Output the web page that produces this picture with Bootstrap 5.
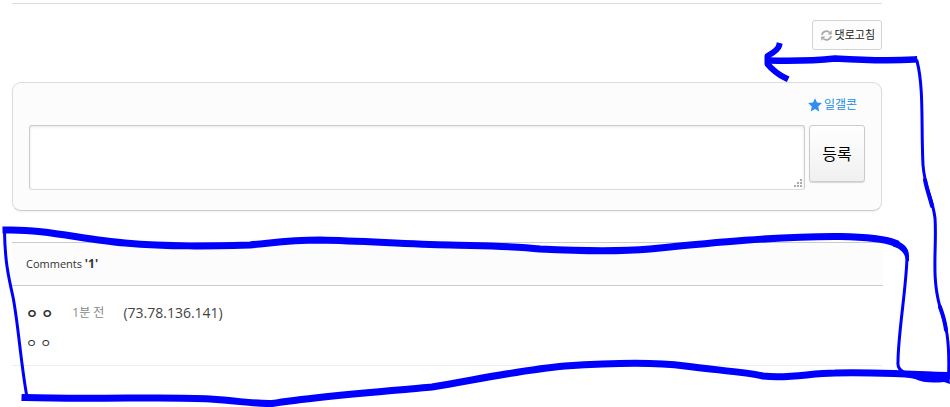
<!DOCTYPE html>
<html lang="ko">
<head>
<meta charset="utf-8">
<meta name="viewport" content="width=device-width, initial-scale=1">
<title>Comments</title>
<link href="https://cdn.jsdelivr.net/npm/bootstrap@5.3.0/dist/css/bootstrap.min.css" rel="stylesheet">
<style>
body { font-family: "Open Sans", "Noto Sans CJK KR", sans-serif; font-size: 12px; line-height: 18px; color: #333; background: #fff; }
.page { padding: 3px 68px 0 12px; }
.rule { border-top: 1px solid #ddd; }
.btn-refresh { height: 30px; padding: 0 6px 0 8px; border: 1px solid #d3d3d3; border-radius: 3px; background: #fdfdfd; color: #222; font-size: 11px; line-height: 18px; gap: 3px; }
.editor { margin-top: 32px; padding: 13px 16px 20px; border: 1px solid #ddd; border-bottom-color: #ccc; border-radius: 9px; background: #fcfcfc; box-shadow: 0 1px 2px rgba(0,0,0,.06); }
.con-link { color: #1a8ce8; margin-right: 8px; gap: 2px; }
.editor-row { margin-top: 11px; }
.input-box { height: 65px; resize: none; border: 1px solid #ccc; border-bottom-color: #ddd; border-radius: 3px; box-shadow: inset 0 1px 3px rgba(0,0,0,.1); font-size: 13px; }
.input-box::-webkit-resizer { display: none; }
.grip { right: 3px; bottom: 3px; }
.btn-submit { width: 56px; height: 57px; padding: 0; border: 1px solid #ccc; border-radius: 3px; background: linear-gradient(#fff, #f0f0f0); box-shadow: 0 1px 1px rgba(0,0,0,.15); font-size: 16px; color: #000; }
.list-head { margin-top: 31px; margin-right: -1px; padding: 12px 14px; border-top: 1px solid #ccc; border-bottom: 1px solid #ccc; background: #fcfcfc; font-size: 11px; line-height: 18px; }
.list-head strong { font-size: 12px; }
.entry { padding: 16px 14px 12px; border-bottom: 1px solid #eee; }
.entry-head { line-height: 22px; gap: 19px; }
.author { font-size: 13px; }
.ago { color: #888; }
.addr { font-size: 14px; color: #444; }
.message { margin-top: 11px; font-size: 12px; }
.ink { fill: none; stroke: #00f; stroke-linecap: square; stroke-linejoin: round; pointer-events: none; }
</style>
<script src="https://cdn.jsdelivr.net/npm/bootstrap@5.3.0/dist/js/bootstrap.bundle.min.js"></script>
</head>
<body class="position-relative overflow-hidden min-vh-100">
<main class="page">
  <div class="rule"></div>
  <div class="d-flex justify-content-end pt-3">
    <button type="button" class="btn btn-refresh d-flex align-items-center">
      <svg width="11" height="11" viewBox="0 0 11 11" fill="none" stroke="#aaa" stroke-width="1.8" aria-hidden="true"><path d="M1 5a4.500 4.500 0 0 1 7.700-2.500M10 6a4.500 4.500 0 0 1-7.700 2.500"/><path fill="#aaa" stroke="none" d="M10.800.3v4.200H6.600zM.2 10.700V6.500h4.200z"/></svg>
      <span>댓로고침</span>
    </button>
  </div>

  <form class="editor">
    <div class="d-flex justify-content-end">
      <a href="#" class="con-link d-flex align-items-center text-decoration-none">
        <svg width="14" height="14" viewBox="0 0 14 14" fill="#2f8ff0" aria-hidden="true"><path d="M7 .3l2 4.300 4.900.5-3.700 3.300 1.100 5.200L7 11l-4.300 2.600 1.100-5.200L.1 5.100 5 4.600z"/></svg>
        <span>일갤콘</span>
      </a>
    </div>
    <div class="editor-row d-flex align-items-start gap-1">
      <div class="position-relative flex-grow-1">
        <textarea class="form-control input-box" aria-label="댓글"></textarea>
        <svg class="grip position-absolute" width="8" height="8" viewBox="0 0 8 8" fill="#aaa" aria-hidden="true"><path d="M6 0h2v2H6zM3 3h2v2H3zM6 3h2v2H6zM0 6h2v2H0zM3 6h2v2H3zM6 6h2v2H6z"/></svg>
      </div>
      <button type="button" class="btn btn-submit flex-shrink-0">등록</button>
    </div>
  </form>

  <section>
    <h2 class="list-head mb-0 fw-normal">Comments <strong>'1'</strong></h2>
    <article class="entry">
      <div class="entry-head d-flex align-items-center">
        <strong class="author">ㅇ ㅇ</strong>
        <span class="ago">1분 전</span>
        <span class="addr">(73.78.136.141)</span>
      </div>
      <p class="message mb-0">ㅇ ㅇ</p>
    </article>
  </section>
</main>

<svg class="ink position-absolute top-0 start-0 w-100" viewBox="0 0 950 407" aria-hidden="true">
  <path stroke-width="7" d="M6 230C45 229 85 240 125 243C170 247 210 246 250 245C280 242 290 240 320 240C365 241 405 244 450 245C490 246 515 246 540 249C580 251 615 252 650 249C710 243 780 236 840 236.500C868 237 885 239 895 243"/>
  <path fill="#00f" stroke="none" d="M894 239.500C904 243 909 248 909 256V261H906C905 253 901 249 893 246.500z"/>
  <path stroke-width="3" d="M4.500 232C5 260 8 275 13 297C18 322 21 365 27 397M907 258C906 290 898 335 898 362Q897 370 906 373"/>
  <path stroke-width="7" d="M25 397.500C100 400 165 396 210 399C240 401 255 404 272 403.500C310 397 385 391 432 387C475 380 520 370 565 366C610 363 655 362 685 366C715 370 745 372 763 376C790 379 810 373 835 373C875 372 910 374 945 376"/>
  <path fill="#00f" stroke="none" d="M900 371L949 372L950 384L944 382Q925 384 915 379L900 376z"/>
  <path stroke-width="3" d="M948.500 378C950 340 946 324 940 307C931 276 937 247 935 218C932 195 925 190 923 165C921 125 924 88 917 61"/>
  <path stroke-width="4" stroke-linecap="round" d="M925 180C927 190 930 198 932 206M940 307C943 315 945 322 946 330"/>
  <path stroke-width="6.500" d="M769 60.500C790 61 812 61 835 58.500C860 60 890 61 914 59.500"/>
  <path stroke-width="6" d="M779 46Q778 50 767.500 56V64Q775 73 785.500 78"/>
</svg>
</body>
</html>
